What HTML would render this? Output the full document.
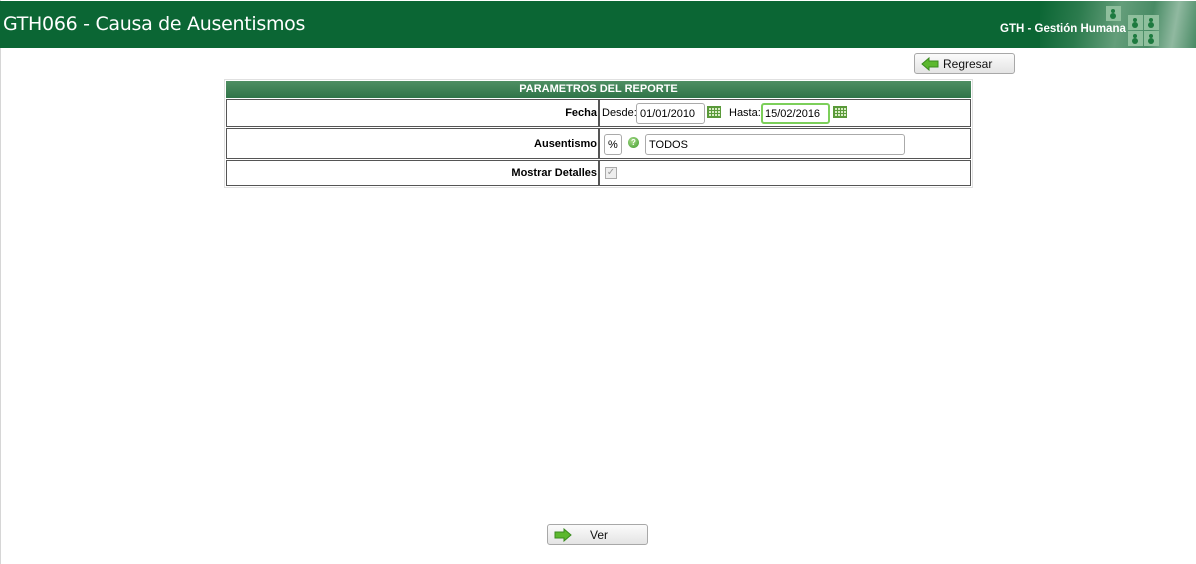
<!DOCTYPE html>
<html><head><meta charset="utf-8"><style>
*{margin:0;padding:0;box-sizing:border-box}
body{width:1196px;height:564px;background:#fff;font-family:"Liberation Sans",sans-serif;position:relative;overflow:hidden}
.lb{position:absolute;left:0;top:0;width:1px;height:564px;background:#d6d6d6}
.hdr{position:absolute;left:0;top:1px;width:1196px;height:47px;background:#0b6634}
.hdr .t{position:absolute;left:3px;top:12px;color:#fff;font-size:19px;font-family:"DejaVu Sans",sans-serif;letter-spacing:-0.3px}
.hdr .img{position:absolute;left:1040px;top:0;width:156px;height:47px;background:linear-gradient(100deg,#0b6634 0%,#2f7d50 25%,#6ea482 50%,#4f8f6a 70%,#9fc2ac 85%,#4f8d69 100%);opacity:.9}
.hdr .r{position:absolute;left:1000px;top:22px;color:#fff;font-size:11.5px;font-weight:bold;font-family:"Liberation Sans",sans-serif}
.sq{position:absolute;width:15px;height:15px;background:#8fbf9d}
.sq:after{content:"";position:absolute;left:5px;top:3px;width:4px;height:4px;border-radius:50%;background:#1d7a3f;box-shadow:0 5px 0 1px #1d7a3f}
.btn{position:absolute;height:21px;border:1px solid #a8a8a8;border-radius:3px;background:linear-gradient(#fbfbfb,#e4e4e4);font-size:12px;color:#111}
.btn span{position:absolute;top:3px}
.arrow{position:absolute;top:3px;left:6px}
.tbl{position:absolute;left:224px;top:79px;width:749px;height:109px;border:1px solid #e0e0e0;font-size:11px}
.th{position:absolute;left:1px;top:1px;width:745px;height:17px;background:linear-gradient(#4f8f63,#2f7448);color:#fff;font-size:11px;font-weight:bold;text-align:center;line-height:17px}
.cell{position:absolute;border:1px solid #555}
.lab{font-weight:bold;text-align:right;padding-right:1px}
.inp{position:absolute;height:21px;border:1px solid #aaa;border-radius:3px;background:#fff;font-size:11px;padding:4px 0 0 3px}
.cal{position:absolute;width:14px;height:12px;border:1px solid #5a9a3a;background-color:#d8ecc4;background-image:linear-gradient(90deg,#5a9a3a 1px,transparent 1px),linear-gradient(#5a9a3a 1px,transparent 1px);background-size:3px 3px}
</style></head><body>
<div class="lb"></div>
<div class="hdr"><div class="t">GTH066 - Causa de Ausentismos</div>
<div class="img"></div>
<div class="sq" style="left:1106px;top:5px"></div>
<div class="sq" style="left:1128px;top:14px"></div><div class="sq" style="left:1144px;top:14px"></div>
<div class="sq" style="left:1128px;top:30px"></div><div class="sq" style="left:1144px;top:30px"></div>
<div class="r">GTH - Gestión Humana</div></div>

<div class="btn" style="left:914px;top:53px;width:101px"><svg class="arrow" width="18" height="14" viewBox="0 0 18 14"><path d="M1 7 L8 1 V4 H17 V10 H8 V13 Z" fill="#5cb82e" stroke="#3a8a1e"/></svg><span style="left:28px">Regresar</span></div>

<div class="tbl">
<div class="th">PARAMETROS DEL REPORTE</div>
<div class="cell lab" style="left:1px;top:19px;width:373px;height:28px;line-height:26px">Fecha</div>
<div class="cell" style="left:374px;top:19px;width:372px;height:28px">
 <span style="position:absolute;left:2px;top:7px">Desde:</span>
 <div class="inp" style="left:36px;top:3px;width:69px">01/01/2010</div>
 <div class="cal" style="left:107px;top:6px"></div>
 <span style="position:absolute;left:129px;top:7px">Hasta:</span>
 <div class="inp" style="left:161px;top:3px;width:69px;border:2px solid #7ccf5a;padding:3px 0 0 2px">15/02/2016</div>
 <div class="cal" style="left:233px;top:6px"></div>
</div>
<div class="cell lab" style="left:1px;top:48px;width:373px;height:31px;line-height:30px">Ausentismo</div>
<div class="cell" style="left:374px;top:48px;width:372px;height:31px">
 <div class="inp" style="left:4px;top:5px;width:18px;padding-left:3px">%</div>
 <div style="position:absolute;left:28px;top:8px;width:11px;height:11px;border-radius:50%;background:radial-gradient(circle at 40% 35%,#a8dc8a,#3d9a2a);color:#fff;font-size:8px;font-weight:bold;text-align:center;line-height:11px">?</div>
 <div class="inp" style="left:45px;top:5px;width:260px">TODOS</div>
</div>
<div class="cell lab" style="left:1px;top:80px;width:373px;height:26px;line-height:24px">Mostrar Detalles</div>
<div class="cell" style="left:374px;top:80px;width:372px;height:26px">
 <div style="position:absolute;left:5px;top:6px;width:12px;height:12px;border:1px solid #aaa;background:#eee;color:#999;font-size:10px;line-height:10px;text-align:center">✓</div>
</div>
</div>

<div class="btn" style="left:547px;top:524px;width:101px"><svg class="arrow" width="18" height="14" viewBox="0 0 18 14"><path d="M17 7 L10 1 V4 H1 V10 H10 V13 Z" fill="#5cb82e" stroke="#3a8a1e"/></svg><span style="left:42px">Ver</span></div>
</body></html>
